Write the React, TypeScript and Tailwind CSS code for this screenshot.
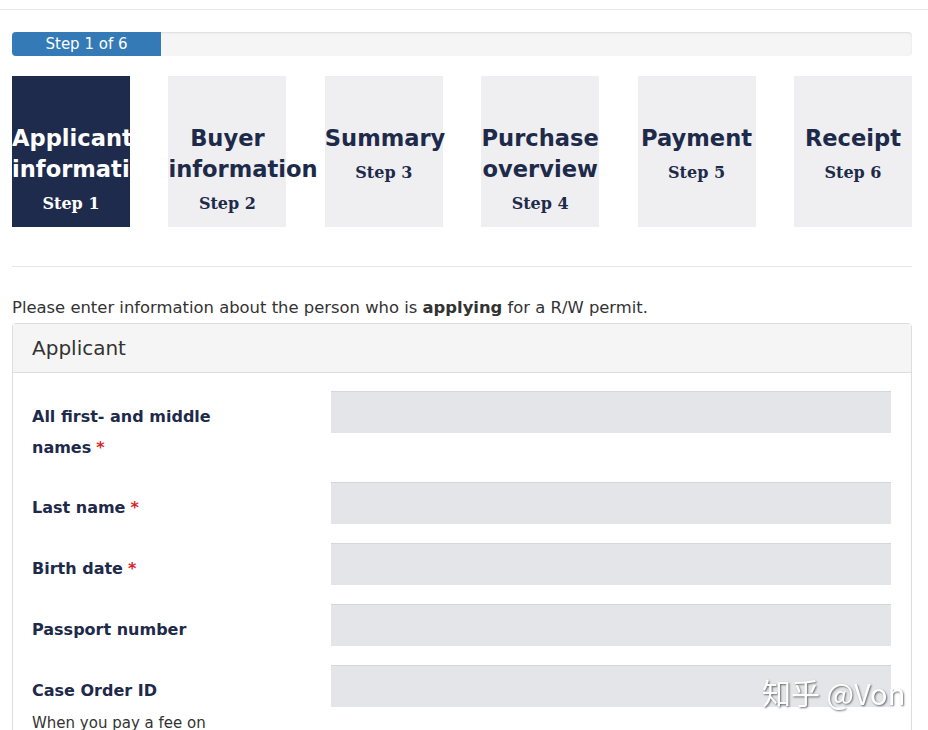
const steps = [
  { title: "Applicant information", n: 1 },
  { title: "Buyer information", n: 2 },
  { title: "Summary", n: 3 },
  { title: "Purchase overview", n: 4 },
  { title: "Payment", n: 5 },
  { title: "Receipt", n: 6 },
];

const fields = [
  { label: "All first- and middle names", required: true },
  { label: "Last name", required: true },
  { label: "Birth date", required: true },
  { label: "Passport number", required: false },
  { label: "Case Order ID", required: false, hint: "When you pay a fee on" },
];

const App = () => {
  return (
    <div className="h-[730px] overflow-hidden bg-white font-['DejaVu_Sans',Verdana,sans-serif] text-[#333]">
      <div className="h-[10px] border-b border-[#e7e7e7]" />

      <div className="ml-3 w-[900px]">
        <div className="mt-[22px] flex h-[24px] overflow-hidden rounded-[4px] bg-[#f5f5f5] shadow-[inset_0_1px_2px_rgba(0,0,0,0.1)]">
          <div className="flex w-[149px] items-center justify-center bg-[#337ab7] text-[15px] text-white">
            Step 1 of 6
          </div>
        </div>

        <div className="mt-[20px] flex justify-between">
          {steps.map((s) => {
            const active = s.n === 1;
            return (
              <div
                key={s.n}
                className={`h-[151px] w-[118px] shrink-0 pt-[47px] text-center ${
                  active ? "overflow-hidden bg-[#1f2b4c] text-white" : "bg-[#efeff1] text-[#1e2a4a]"
                }`}
              >
                <div className="text-[22.6px] font-bold leading-[31px]">{s.title}</div>
                <div className="font-['DejaVu_Serif',serif] text-[16px] font-bold leading-[37px]">Step {s.n}</div>
              </div>
            );
          })}
        </div>

        <div className="mt-[39px] border-t border-[#e5e5e5]" />

        <p className="mt-[30px] text-[16.4px] leading-[22px] text-[#333]">
          Please enter information about the person who is <strong>applying</strong> for a R/W permit.
        </p>

        <div className="mt-[4px] rounded-t-[4px] border border-[#dddddd]">
          <div className="flex h-[49px] items-center border-b border-[#dddddd] bg-[#f5f5f5] px-[19px] text-[20px] text-[#333]">
            Applicant
          </div>
          <div className="px-[19px] pt-[18px] pb-10">
            {fields.map((f, i) => (
              <div key={i} className="mb-[19px] flex">
                <div className="w-[299px] pr-4">
                  <div className="w-[200px] pt-[10px] text-[16px] font-bold leading-[31px] text-[#1e2a4a]">
                    {f.label}
                    {f.required && <span className="ml-[5px] text-[#d9262c]">*</span>}
                  </div>
                  {f.hint && <div className="mt-[7px] text-[15px] leading-[20px] text-[#333]">{f.hint}</div>}
                </div>
                <div className="h-[42px] w-[560px] border-t border-[#d5d6da] bg-[#e4e5e9]" />
              </div>
            ))}
          </div>
        </div>
      </div>

      <div className="pointer-events-none fixed left-[762px] top-[671px] font-['Noto_Sans_CJK_SC',sans-serif] text-[29px] text-white [text-shadow:1px_1px_2px_rgba(0,0,0,0.55)]">
        知乎 @Von
      </div>
    </div>
  );
};

export default App;
